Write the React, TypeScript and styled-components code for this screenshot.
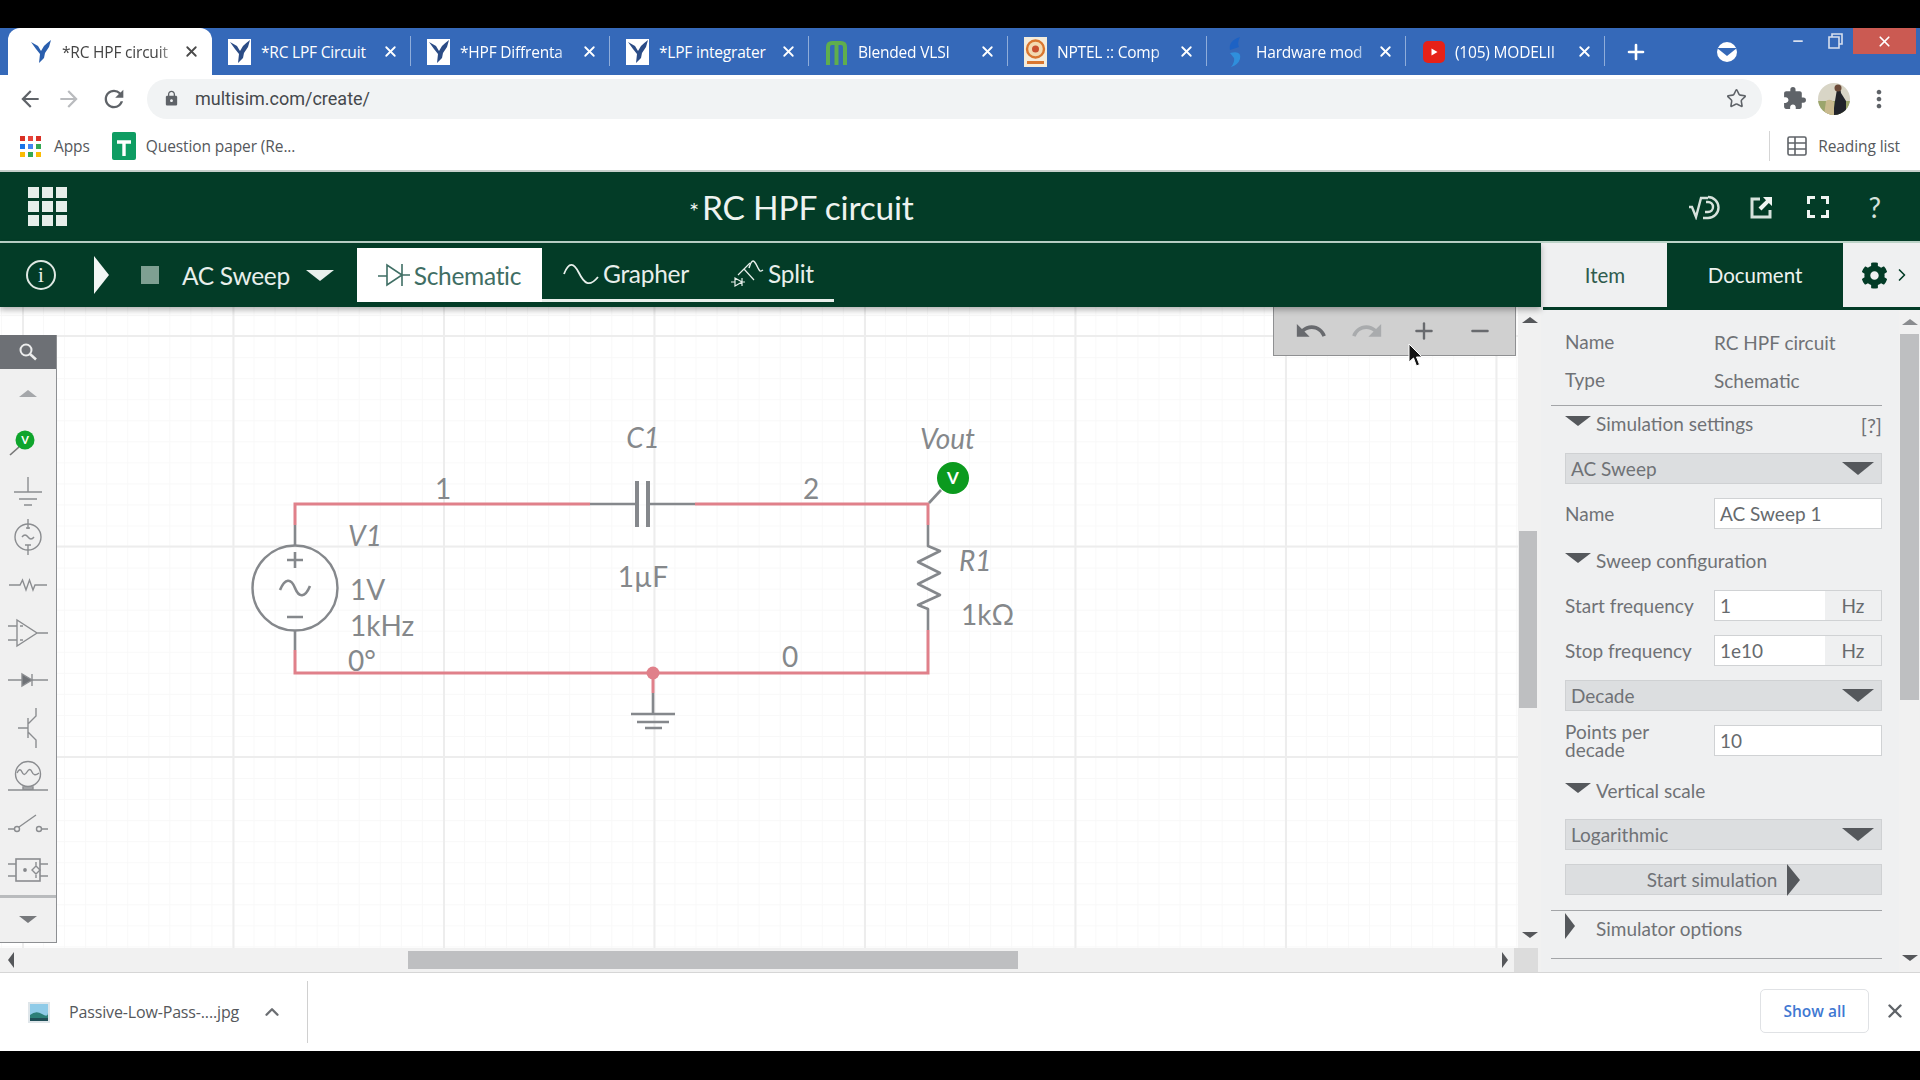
import React from 'react';
import styled, { createGlobalStyle, css } from 'styled-components';
import { X, Plus, Minus, Star, ChevronUp, ChevronRight } from 'lucide-react';
import { MdArrowBack, MdArrowForward, MdRefresh, MdLock, MdExtension, MdMoreVert, MdUndo, MdRedo } from 'react-icons/md';
import { FaCog } from 'react-icons/fa';

const GREEN = '#033c27';
const WIRE = '#e0808a';
const PART = '#85888c';
const LABEL = '#85888b';

const GlobalStyle = createGlobalStyle`
  html, body { margin: 0; padding: 0; background: #000; }
  * { box-sizing: border-box; }
  svg { display: block; }
`;

const Page = styled.div`
  width: 1920px;
  height: 1080px;
  display: flex;
  flex-direction: column;
  background: #000;
  overflow: hidden;
  font-family: Lato, 'Open Sans', sans-serif;
`;

const Letterbox = styled.div<{ $h: number }>`
  height: ${({ $h }) => $h}px;
  flex: none;
  background: #000;
`;

/* browser chrome */
const TabStrip = styled.div`
  height: 47px;
  flex: none;
  display: flex;
  align-items: stretch;
  padding-left: 8px;
  background: #3569b9;
  position: relative;
`;

const Tab = styled.div<{ $active?: boolean }>`
  position: relative;
  width: ${({ $active }) => ($active ? 204 : 199)}px;
  flex: none;
  display: flex;
  align-items: center;
  padding: 0 12px 0 ${({ $active }) => ($active ? 21 : 16)}px;
  font: 15.5px 'Open Sans', sans-serif;
  letter-spacing: -0.2px;
  color: ${({ $active }) => ($active ? '#444' : '#fff')};
  ${({ $active }) =>
    $active
      ? css`
          background: #fff;
          border-radius: 12px 12px 0 0;
        `
      : css`
          &::after {
            content: '';
            position: absolute;
            right: 0;
            top: 8px;
            bottom: 9px;
            width: 1px;
            background: #8fadda;
          }
        `}
`;

const TabIcon = styled.span`
  width: 23px;
  height: 26px;
  flex: none;
  margin-right: 10px;
  display: flex;
  align-items: center;
  justify-content: center;
`;

const TabTitle = styled.span<{ $fade?: boolean }>`
  flex: 1;
  overflow: hidden;
  white-space: nowrap;
  ${({ $fade }) =>
    $fade &&
    css`
      -webkit-mask-image: linear-gradient(90deg, #000 82%, transparent 100%);
      mask-image: linear-gradient(90deg, #000 82%, transparent 100%);
    `}
`;

const TabClose = styled.span`
  flex: none;
  display: flex;
  margin-left: 4px;
`;

const NewTab = styled.div`
  width: 62px;
  flex: none;
  display: flex;
  align-items: center;
  justify-content: center;
  color: #fff;
`;

const WindowControls = styled.div`
  margin-left: auto;
  display: flex;
  align-items: flex-start;
  color: #cfd9ea;
`;

const ProfileDot = styled.div`
  width: 20px;
  height: 20px;
  margin: 14px 42px 0 0;
  border-radius: 50%;
  background: #fff;
  display: flex;
  align-items: center;
  justify-content: center;
`;

const Caret = styled.span<{ $dir: 'up' | 'down' | 'left' | 'right'; $size: number; $color: string }>`
  display: inline-block;
  flex: none;
  width: 0;
  height: 0;
  border-style: solid;
  border-color: transparent;
  ${({ $dir, $size, $color }) => {
    const s = $size;
    const w = Math.round(s * 1.25);
    switch ($dir) {
      case 'up':
        return `border-width:0 ${w}px ${s}px; border-bottom-color:${$color};`;
      case 'down':
        return `border-width:${s}px ${w}px 0; border-top-color:${$color};`;
      case 'left':
        return `border-width:${w}px ${s}px ${w}px 0; border-right-color:${$color};`;
      default:
        return `border-width:${w}px 0 ${w}px ${s}px; border-left-color:${$color};`;
    }
  }}
`;

const WinButton = styled.div<{ $close?: boolean }>`
  width: ${({ $close }) => ($close ? 63 : 37)}px;
  height: 26px;
  margin-right: ${({ $close }) => ($close ? 4 : 0)}px;
  display: flex;
  align-items: center;
  justify-content: center;
  background: ${({ $close }) => ($close ? '#cb5a52' : 'transparent')};
  color: #fff;
`;

const UrlRow = styled.div`
  height: 47px;
  flex: none;
  display: flex;
  align-items: center;
  background: #fff;
  color: #6a6c70;
`;

const NavIcon = styled.span<{ $w: number; $muted?: boolean }>`
  width: ${({ $w }) => $w}px;
  flex: none;
  display: flex;
  justify-content: center;
  color: ${({ $muted }) => ($muted ? '#b9bbbe' : '#5f6368')};
`;

const Omnibox = styled.div`
  width: 1615px;
  height: 40px;
  flex: none;
  margin-left: 11px;
  padding-left: 16px;
  display: flex;
  align-items: center;
  border-radius: 20px;
  background: #f1f3f4;
  font: 18px Roboto, sans-serif;
  color: #45484c;
`;

const OmniLock = styled.span`
  display: flex;
  margin-right: 15px;
  color: #5f6368;
`;

const OmniStar = styled.span`
  margin-left: auto;
  margin-right: 15px;
  display: flex;
  color: #5f6368;
`;

const Bookmarks = styled.div`
  height: 50px;
  flex: none;
  display: flex;
  align-items: center;
  padding: 0 20px;
  background: #fff;
  border-bottom: 2px solid #c7cfcb;
  font: 15.5px 'Open Sans', sans-serif;
  color: #55585c;
  letter-spacing: -0.1px;
`;

const AppsDots = styled.div`
  display: grid;
  grid-template-columns: repeat(3, 5px);
  gap: 3px 3px;
  margin-right: 13px;
`;

const AppsDot = styled.i<{ $c: string }>`
  width: 5px;
  height: 5px;
  background: ${({ $c }) => $c};
`;

const SheetBadge = styled.span`
  margin: 0 10px 0 22px;
  display: flex;
`;

const ReadingList = styled.div`
  margin-left: auto;
  height: 30px;
  display: flex;
  align-items: center;
  gap: 11px;
  padding-left: 17px;
  border-left: 1px solid #d5d5d5;
`;

/* multisim header */
const AppHeader = styled.div`
  height: 69px;
  flex: none;
  display: flex;
  align-items: center;
  position: relative;
  padding-left: 28px;
  background: ${GREEN};
  border-bottom: 2px solid #bcd3c8;
  box-sizing: content-box;
`;

const Waffle = styled.div`
  display: grid;
  grid-template-columns: repeat(3, 11px);
  gap: 3px;
`;

const WaffleCell = styled.i`
  width: 11px;
  height: 11px;
  background: #e6eeea;
`;

const AppTitle = styled.div`
  margin-left: 622px;
  display: flex;
  align-items: baseline;
  color: #eef3f0;
  font-size: 33.5px;
  letter-spacing: -0.2px;
`;

const TitleStar = styled.span`
  font-size: 24px;
  margin-right: 3px;
`;

const HeaderIcons = styled.div`
  margin-left: auto;
  display: flex;
  align-items: center;
  color: #d6e2dc;
`;

const HeaderIcon = styled.span`
  width: 56.5px;
  display: flex;
  justify-content: center;
  font-size: 28px;
`;

/* work area */
const Workspace = styled.div`
  flex: 1;
  min-height: 0;
  display: flex;
  background: #fff;
`;

const LeftColumn = styled.div`
  width: 1541px;
  flex: none;
  display: flex;
  flex-direction: column;
`;

const SimToolbar = styled.div`
  height: 64px;
  flex: none;
  display: flex;
  align-items: center;
  padding-left: 26px;
  background: ${GREEN};
  color: #e8efeb;
  position: relative;
  z-index: 2;
  box-shadow: 0 3px 6px rgba(0, 0, 0, 0.3);
`;

const InfoCircle = styled.div`
  width: 30px;
  height: 30px;
  flex: none;
  border: 2px solid #dfe8e3;
  border-radius: 50%;
  display: flex;
  align-items: center;
  justify-content: center;
  font: 21px 'Liberation Serif', serif;
`;

const PlayBtn = styled.span`
  margin-left: 38px;
  display: flex;
`;

const StopBtn = styled.span`
  width: 18px;
  height: 18px;
  margin-left: 32px;
  background: #7ea092;
`;

const SimMode = styled.span`
  margin-left: 23px;
  font-size: 24.5px;
  letter-spacing: -0.3px;
`;

const ModeCaret = styled.span`
  margin-left: 16px;
  margin-right: 23px;
  display: flex;
`;

const ViewTabs = styled.div`
  height: 54px;
  align-self: flex-start;
  margin-top: 5px;
  display: flex;
  border-bottom: 3px solid #e8efeb;
`;

const ViewTab = styled.div<{ $active?: boolean; $w: number }>`
  width: ${({ $w }) => $w}px;
  margin-bottom: ${({ $active }) => ($active ? -3 : 0)}px;
  display: flex;
  align-items: center;
  justify-content: center;
  gap: 4px;
  font-size: 24.5px;
  letter-spacing: -0.3px;
  background: ${({ $active }) => ($active ? '#fff' : 'transparent')};
  color: ${({ $active }) => ($active ? '#3f6e64' : '#e8efeb')};
`;

const CanvasFrame = styled.div`
  flex: 1;
  min-height: 0;
  display: flex;
  flex-direction: column;
`;

const CanvasRow = styled.div`
  flex: 1;
  min-height: 0;
  display: flex;
`;

const Viewport = styled.div`
  position: relative;
  width: 1518px;
  flex: none;
  overflow: hidden;
  background-color: #fff;
  background-image:
    linear-gradient(90deg, #ededed 2px, transparent 2px),
    linear-gradient(0deg, #ededed 2px, transparent 2px),
    linear-gradient(90deg, #f8f8f8 1px, transparent 1px),
    linear-gradient(0deg, #f8f8f8 1px, transparent 1px);
  background-size: 210.5px 210.5px, 210.5px 210.5px, 21.05px 21.05px, 21.05px 21.05px;
  background-position: 22px 0, 0 30px, 22px 0, 0 9px;
`;

const Palette = styled.div`
  position: absolute;
  left: 0;
  top: 28px;
  width: 57px;
  height: 608px;
  display: flex;
  flex-direction: column;
  background: #f0f0f0;
  border-right: 1px solid #8d8f92;
  border-bottom: 1px solid #8d8f92;
`;

const PaletteSearch = styled.div`
  height: 34px;
  flex: none;
  display: flex;
  align-items: center;
  justify-content: center;
  background: #6d7075;
`;

const PaletteArrow = styled.div<{ $h: number; $down?: boolean }>`
  flex: none;
  height: ${({ $h }) => $h}px;
  display: flex;
  align-items: center;
  justify-content: center;
  ${({ $down }) => $down && 'border-top: 3px solid #b9bbbd;'}
`;

const PaletteItem = styled.div`
  height: 47.7px;
  flex: none;
  display: flex;
  align-items: center;
  justify-content: center;
`;

const UndoBar = styled.div`
  position: absolute;
  right: 2px;
  top: 0;
  width: 243px;
  height: 49px;
  display: flex;
  align-items: center;
  padding-left: 9px;
  background: #d0d0d0;
  border: 1px solid #8f9092;
  border-top: none;
  color: #6a6c70;
`;

const UndoSlot = styled.span<{ $muted?: boolean }>`
  width: 56.3px;
  display: flex;
  justify-content: center;
  color: ${({ $muted }) => ($muted ? '#a9abad' : '#686a6e')};
`;

const Cursor = styled.svg`
  position: absolute;
  left: 1408px;
  top: 36px;
`;

const VScroll = styled.div<{ $w: number }>`
  width: ${({ $w }) => $w}px;
  flex: none;
  position: relative;
  background: #f1f1f1;
  display: flex;
  flex-direction: column;
  align-items: center;
`;

const ScrollArrowSlot = styled.div<{ $h: number }>`
  height: ${({ $h }) => $h}px;
  flex: none;
  display: flex;
  align-items: center;
  justify-content: center;
`;

const VThumb = styled.div<{ $w: number; $top: number; $h: number }>`
  position: absolute;
  left: 1px;
  top: ${({ $top }) => $top}px;
  width: ${({ $w }) => $w}px;
  height: ${({ $h }) => $h}px;
  background: #bebfc1;
`;

const VSpacer = styled.div`
  flex: 1;
`;

const HScroll = styled.div`
  height: 24px;
  flex: none;
  display: flex;
  align-items: center;
  background: #f1f1f1;
  padding-left: 8px;
`;

const HThumb = styled.div`
  width: 610px;
  height: 18px;
  margin-left: 394px;
  background: #bebfc1;
`;

const HRightArrow = styled.div`
  margin-left: 484px;
  display: flex;
`;

const HCorner = styled.div`
  width: 24px;
  height: 24px;
  margin-left: 6px;
  background: #dcdcdc;
`;

/* right panel */
const RightColumn = styled.div`
  flex: 1;
  min-width: 0;
  display: flex;
  flex-direction: column;
  background: #eff0f1;
`;

const PanelTabs = styled.div`
  height: 67px;
  flex: none;
  display: flex;
  align-items: stretch;
  margin-left: 2px;
  border-bottom: 3px solid ${GREEN};
`;

const PanelTab = styled.div<{ $active?: boolean; $w: number }>`
  width: ${({ $w }) => $w}px;
  display: flex;
  align-items: center;
  justify-content: center;
  font-size: 20.5px;
  background: ${({ $active }) => ($active ? GREEN : 'transparent')};
  color: ${({ $active }) => ($active ? '#eef3f0' : '#2f5c4e')};
`;

const PanelGear = styled.div`
  flex: 1;
  display: flex;
  align-items: center;
  padding-left: 18px;
  gap: 4px;
  color: ${GREEN};
`;

const PanelBody = styled.div`
  flex: 1;
  min-height: 0;
  display: flex;
`;

const Form = styled.div`
  flex: 1;
  min-width: 0;
  overflow: hidden;
  padding: 13px 17px 0 24px;
  color: #6f7276;
  font-size: 19px;
`;

const InfoRow = styled.div`
  height: 38px;
  display: flex;
  align-items: center;
`;

const FieldLabel = styled.div`
  width: 149px;
  flex: none;
  line-height: 18px;
`;

const Divider = styled.div<{ $mt: number }>`
  height: 1px;
  margin: ${({ $mt }) => $mt}px 0 0 -14px;
  background: #a3a5a8;
`;

const SectionHead = styled.div<{ $mt?: number }>`
  height: 34px;
  margin-top: ${({ $mt }) => $mt ?? 0}px;
  display: flex;
  align-items: center;
`;

const SectionArrow = styled.span`
  width: 31px;
  flex: none;
  display: flex;
  margin-top: -4px;
`;

const HelpLink = styled.span`
  margin-left: auto;
  margin-top: 3px;
  font-size: 20px;
`;

const SelectBox = styled.div<{ $mt: number }>`
  height: 31px;
  margin-top: ${({ $mt }) => $mt}px;
  display: flex;
  align-items: center;
  justify-content: space-between;
  padding: 0 7px 0 5px;
  background: #dcdee0;
  border: 1px solid #cfd1d3;
`;

const FieldRow = styled.div<{ $mt: number }>`
  height: 31px;
  margin-top: ${({ $mt }) => $mt}px;
  display: flex;
  align-items: center;
`;

const InputBox = styled.div`
  flex: 1;
  height: 31px;
  display: flex;
  align-items: center;
  justify-content: space-between;
  padding-left: 5px;
  background: #fff;
  border: 1px solid #d0d2d4;
  color: #666a6e;
`;

const UnitCell = styled.span`
  width: 56px;
  height: 100%;
  display: flex;
  align-items: center;
  justify-content: center;
  background: #eff0f1;
`;

const StartButton = styled.div<{ $mt: number }>`
  height: 31px;
  margin-top: ${({ $mt }) => $mt}px;
  display: flex;
  align-items: center;
  justify-content: center;
  gap: 10px;
  background: #dcdee0;
  border: 1px solid #cfd1d3;
`;

/* download shelf */
const DownloadBar = styled.div`
  height: 79px;
  flex: none;
  display: flex;
  align-items: center;
  padding-left: 28px;
  background: #fff;
  border-top: 1px solid #d6d6d6;
  font: 16px 'Open Sans', sans-serif;
  color: #55585c;
`;

const FileName = styled.span`
  margin-left: 19px;
  letter-spacing: -0.15px;
`;

const FileChevron = styled.span`
  margin-left: 22px;
  display: flex;
  color: #6b6e72;
`;

const ShelfSep = styled.div`
  width: 1px;
  height: 62px;
  margin-left: 24px;
  background: #d0d0d0;
`;

const ShowAll = styled.div`
  margin-left: auto;
  width: 109px;
  height: 44px;
  margin-top: -2px;
  display: flex;
  align-items: center;
  justify-content: center;
  border: 1px solid #e0e2e5;
  border-radius: 5px;
  color: #3f78d2;
  font-weight: 600;
  font-size: 15.5px;
`;

const ShelfClose = styled.span`
  width: 51px;
  margin-top: -2px;
  display: flex;
  justify-content: center;
  color: #5f6368;
`;

/* small drawings */
const NiMark = ({ color }: { color: string }) => (
  <path
    d="M2 3 L9 7 L12 12 L15 7 Q18 4 22 1 L20 8 L16 14 L15 19 L10 24 L11 15 L7 10 Z"
    fill={color}
  />
);

const NiIcon = ({ active }: { active?: boolean }) => (
  <svg width="23" height="26" viewBox="0 0 23 26">
    {!active && <rect x="0" y="0" width="23" height="26" fill="#fff" />}
    <NiMark color={active ? '#2a5fae' : '#2b4c86'} />
  </svg>
);

const MoodleIcon = () => (
  <svg width="23" height="26" viewBox="0 0 23 26" fill="none" stroke="#5fae4e" strokeWidth="4">
    <path d="M3 26V8Q3 4 7 4H16Q20 4 20 8V26M11.5 5V26" />
  </svg>
);

const NptelIcon = () => (
  <svg width="23" height="30" viewBox="0 0 23 30">
    <rect width="23" height="30" fill="#f4ecdc" />
    <circle cx="11.5" cy="12" r="8.5" fill="#f3d9b0" stroke="#d9762f" strokeWidth="2.4" />
    <circle cx="11.5" cy="12" r="3.5" fill="#c9502f" />
    <rect x="3" y="24" width="17" height="3" fill="#d9762f" />
  </svg>
);

const HardwareIcon = () => (
  <svg width="20" height="32" viewBox="0 0 20 32">
    <path d="M15 1Q3 5 5 14L14 11Q12 7 15 1Z" fill="#1d62c4" />
    <path d="M5 17Q17 14 15 23Q13 29 6 31Q10 26 9 22Z" fill="#2f8fdc" />
  </svg>
);

const YoutubeIcon = () => (
  <svg width="22" height="22" viewBox="0 0 22 22">
    <rect width="22" height="22" rx="5" fill="#e62117" />
    <path d="M8.5 7.5 L14.5 11 L8.5 14.5Z" fill="#fff" />
  </svg>
);

const tabs = [
  { title: '*RC HPF circuit', icon: <NiIcon active />, active: true, fade: true },
  { title: '*RC LPF Circuit', icon: <NiIcon /> },
  { title: '*HPF Diffrenta', icon: <NiIcon />, fade: true },
  { title: '*LPF integrater', icon: <NiIcon /> },
  { title: 'Blended VLSI', icon: <MoodleIcon />, fade: true },
  { title: 'NPTEL :: Comp', icon: <NptelIcon />, fade: true },
  { title: 'Hardware mod', icon: <HardwareIcon />, fade: true },
  { title: '(105) MODELII', icon: <YoutubeIcon />, fade: true },
];

const Avatar = () => (
  <svg width="32" height="32" viewBox="0 0 32 32">
    <defs>
      <clipPath id="av">
        <circle cx="16" cy="16" r="16" />
      </clipPath>
    </defs>
    <g clipPath="url(#av)">
      <rect width="32" height="32" fill="#d8d5c6" />
      <rect y="18" width="32" height="14" fill="#9ba56c" />
      <path d="M19 6q4 0 4 4l5 8v14H15l2-14z" fill="#22242a" />
      <circle cx="20" cy="5" r="3.5" fill="#6b4a38" />
      <path d="M8 18q4-3 8 1v13H6z" fill="#c9ba8f" />
    </g>
  </svg>
);

const ReadingIcon = () => (
  <svg width="20" height="20" viewBox="0 0 20 20" fill="none" stroke="#5f6368" strokeWidth="1.6">
    <rect x="1" y="1" width="18" height="18" rx="1.5" />
    <path d="M1 7H19M1 13H19M8 1V19" />
  </svg>
);

const SheetIcon = () => (
  <svg width="24" height="28" viewBox="0 0 24 28">
    <rect width="24" height="28" rx="2" fill="#0e9c62" />
    <path d="M5 10H19M12 10V24" stroke="#fff" strokeWidth="3.4" />
  </svg>
);

const ImageFileIcon = () => (
  <svg width="22" height="21" viewBox="0 0 22 21">
    <rect width="22" height="21" fill="#dfe6ea" />
    <rect x="2" y="2" width="18" height="17" fill="#8fcbe8" />
    <path d="M2 13Q8 8 14 12T20 11V19H2Z" fill="#2c7f78" />
    <rect x="2" y="16" width="18" height="3" fill="#1f4e57" />
  </svg>
);

const ProbeHeaderIcon = () => (
  <svg width="34" height="26" viewBox="0 0 34 26" fill="none" stroke="#d6e2dc" strokeWidth="2.4">
    <path d="M1 13H4L8 23L13 4H20" />
    <path d="M15 24H20A10.5 10.5 0 0 0 20 3" />
    <path d="M17 18H20A5 5 0 0 0 20 8H18" />
  </svg>
);

const PopoutIcon = () => (
  <svg width="24" height="24" viewBox="0 0 24 24">
    <path d="M10 4H2V22H20V15" fill="none" stroke="#d6e2dc" strokeWidth="3" />
    <path d="M13 2H22V11L18.8 8L11.5 15.5L8.5 12.5L16 5.2Z" fill="#f0f5f2" />
  </svg>
);

const FullscreenIcon = () => (
  <svg width="22" height="22" viewBox="0 0 22 22" fill="none" stroke="#f0f5f2" strokeWidth="3">
    <path d="M1.5 8V1.5H8M14 1.5H20.5V8M20.5 14V20.5H14M8 20.5H1.5V14" />
  </svg>
);

const DiodeTabIcon = () => (
  <svg width="32" height="24" viewBox="0 0 32 24" fill="none" stroke="#3f6e64" strokeWidth="1.6">
    <path d="M0 13H9M9 2V22L24 12ZM24 1V23M24 12H32" />
  </svg>
);

const WaveTabIcon = () => (
  <svg width="36" height="24" viewBox="0 0 36 24" fill="none" stroke="#e8efeb" strokeWidth="1.8">
    <path d="M1 12C6 -1 11 1 16 11S26 26 35 15" />
  </svg>
);

const SplitTabIcon = () => (
  <svg width="34" height="28" viewBox="0 0 34 28" fill="none" stroke="#e8efeb" strokeWidth="1.2">
    <path d="M1 22H5M5 18V26L12 22ZM12 18V26M12 22H15" />
    <path d="M8 15L20 3M14 9L24 20" />
    <path d="M19 8C22 -2 24 0 27 6S30 12 33 10" strokeWidth="1.5" />
  </svg>
);

const SearchIcon = () => (
  <svg width="20" height="20" viewBox="0 0 20 20" fill="none" stroke="#eceded" strokeWidth="2">
    <circle cx="8" cy="8" r="5.5" />
    <path d="M12 12L18 17.5" strokeWidth="2.6" />
  </svg>
);

const PaletteGlyph = ({ children }: { children: React.ReactNode }) => (
  <svg width="48" height="48" viewBox="0 0 48 48" fill="none" stroke="#8b8d90" strokeWidth="1.4">
    {children}
  </svg>
);

const paletteParts: React.ReactNode[] = [
  <>
    <path d="M6 37L15 29" stroke="#777" strokeWidth="1.6" />
    <circle cx="21" cy="22" r="9.5" fill="#0fa52c" stroke="none" />
    <text x="21" y="26" textAnchor="middle" fill="#fff" stroke="none" fontSize="11" fontWeight="700" fontFamily="Lato">
      V
    </text>
  </>,
  <path d="M24 11V26M10 26H38M15 33H33M20 39H28" />,
  <>
    <circle cx="24" cy="24" r="13" />
    <path d="M24 6V16M24 32V42M22 15H26M18 24Q21 20 24 24T30 24M21 32H27" />
  </>,
  <path d="M5 24H16L18.5 19L22 29L25.5 19L29 29L31 24H43" />,
  <path d="M4 17H13M4 31H13M13 11V37L33 24ZM33 24H44M16 17H19M16 31H19" />,
  <>
    <path d="M4 24H44M28 18V30" />
    <path d="M18 18V30L28 24Z" fill="#6f7276" />
  </>,
  <path d="M14 24H24M24 14V34M24 20L32 12V4M24 28L32 36V44" />,
  <>
    <circle cx="24" cy="22" r="12.5" />
    <path d="M13 21Q16 15 18 20T23 20T28 20T35 21M19 35H29V37H19ZM4 38H44" />
  </>,
  <>
    <circle cx="13" cy="30" r="2.5" />
    <circle cx="35" cy="30" r="2.5" />
    <path d="M4 30H10M38 30H44M15 28L32 16" />
  </>,
  <>
    <rect x="12" y="12" width="24" height="22" strokeWidth="1.6" />
    <path d="M4 17H12M4 29H12M36 17H44M36 29H44M32 15V20M32 26V31M28 23L32 19L36 23L32 27Z" />
    <circle cx="21" cy="23" r="1.2" fill="#6f7276" />
  </>,
];

const CircuitDrawing = () => (
  <svg width="1518" height="641" viewBox="0 307 1518 641">
    <g fill="none" strokeLinejoin="miter">
      <g stroke={WIRE} strokeWidth="3">
        <path d="M295 525V504H590" />
        <path d="M695 504H928V525" />
        <path d="M928 630V673H295V650" />
        <path d="M653 673V693" />
      </g>
      <circle cx="653" cy="673" r="6.5" fill={WIRE} />
      <g stroke={PART} strokeWidth="2.6">
        <path d="M295 525V545M295 631V650" />
        <circle cx="295" cy="588" r="42.5" strokeWidth="2.4" />
        <path d="M287 560H303M295 552V568M287 617H303" />
        <path d="M280 590C285 578 291 578 295 588S305 598 310 586" />
        <path d="M590 504H637M648 504H695" />
        <path d="M637 481V527M648 481V527" strokeWidth="4" />
        <path d="M928 525V546L940 551L918 562L940 573L918 584L940 595L918 605L928 609V630" strokeLinejoin="round" />
        <path d="M653 693V714M631 714H675M637 722H669M645 728H662" />
        <path d="M929 503L941 490" />
      </g>
      <circle cx="953" cy="478" r="16" fill="#0b9a1e" />
    </g>
    <g fontFamily="Lato, sans-serif" fontSize="28" fill={LABEL}>
      <text x="643" y="448" textAnchor="middle" fontStyle="italic">C1</text>
      <text x="443" y="499" textAnchor="middle">1</text>
      <text x="811" y="499" textAnchor="middle">2</text>
      <text x="790" y="667" textAnchor="middle">0</text>
      <text x="348" y="546" fontStyle="italic">V1</text>
      <text x="350" y="600">1V</text>
      <text x="350" y="636">1kHz</text>
      <text x="348" y="671">0°</text>
      <text x="643" y="587" textAnchor="middle">1µF</text>
      <text x="920" y="449" fontStyle="italic">Vout</text>
      <text x="959" y="571" fontStyle="italic">R1</text>
      <text x="961" y="625">1kΩ</text>
      <text x="953" y="484" textAnchor="middle" fill="#fff" fontSize="17" fontWeight="700">V</text>
    </g>
  </svg>
);

export default function App() {
  return (
    <Page>
      <GlobalStyle />
      <Letterbox $h={28} />

      <TabStrip>
        {tabs.map((t) => (
          <Tab key={t.title} $active={t.active}>
            <TabIcon>{t.icon}</TabIcon>
            <TabTitle $fade={t.fade}>{t.title}</TabTitle>
            <TabClose>
              <X size={17} strokeWidth={2.6} color={t.active ? '#4a4a4a' : '#fff'} />
            </TabClose>
          </Tab>
        ))}
        <NewTab>
          <Plus size={24} strokeWidth={2.6} />
        </NewTab>
        <WindowControls>
          <ProfileDot>
            <Caret $dir="down" $size={8} $color="#3569b9" />
          </ProfileDot>
          <WinButton>
            <Minus size={14} strokeWidth={3} color="#d7dfee" />
          </WinButton>
          <WinButton>
            <svg width="16" height="16" viewBox="0 0 16 16" fill="none" stroke="#d7dfee" strokeWidth="1.6">
              <path d="M5 4V1H15V11H12M2 4H12V15H2Z" />
            </svg>
          </WinButton>
          <WinButton $close>
            <X size={17} strokeWidth={2.4} />
          </WinButton>
        </WindowControls>
      </TabStrip>

      <UrlRow>
        <NavIcon $w={60} style={{ marginRight: -14 }}>
          <MdArrowBack size={26} />
        </NavIcon>
        <NavIcon $w={46} $muted>
          <MdArrowForward size={26} />
        </NavIcon>
        <NavIcon $w={44}>
          <MdRefresh size={28} />
        </NavIcon>
        <Omnibox>
          <OmniLock>
            <MdLock size={17} />
          </OmniLock>
          multisim.com/create/
          <OmniStar>
            <Star size={21} strokeWidth={1.8} />
          </OmniStar>
        </Omnibox>
        <NavIcon $w={48} style={{ marginLeft: 8 }}>
          <MdExtension size={25} />
        </NavIcon>
        <Avatar />
        <NavIcon $w={60} style={{ marginLeft: -1 }}>
          <MdMoreVert size={28} />
        </NavIcon>
      </UrlRow>

      <Bookmarks>
        <AppsDots>
          {['#d93025', '#e8453c', '#d93025', '#1a73e8', '#4285f4', '#34a853', '#fbbc04', '#34a853', '#fbbc04'].map((c, i) => (
            <AppsDot key={i} $c={c} />
          ))}
        </AppsDots>
        Apps
        <SheetBadge>
          <SheetIcon />
        </SheetBadge>
        Question paper (Re...
        <ReadingList>
          <ReadingIcon />
          Reading list
        </ReadingList>
      </Bookmarks>

      <AppHeader>
        <Waffle>
          {Array.from({ length: 9 }, (_, i) => (
            <WaffleCell key={i} />
          ))}
        </Waffle>
        <AppTitle>
          <TitleStar>*</TitleStar>RC HPF circuit
        </AppTitle>
        <HeaderIcons>
          <HeaderIcon>
            <ProbeHeaderIcon />
          </HeaderIcon>
          <HeaderIcon>
            <PopoutIcon />
          </HeaderIcon>
          <HeaderIcon>
            <FullscreenIcon />
          </HeaderIcon>
          <HeaderIcon>?</HeaderIcon>
          <Letterbox $h={0} style={{ width: 17 }} />
        </HeaderIcons>
      </AppHeader>

      <Workspace>
        <LeftColumn>
          <SimToolbar>
            <InfoCircle>i</InfoCircle>
            <PlayBtn>
              <Caret $dir="right" $size={15} $color="#f2f6f4" />
            </PlayBtn>
            <StopBtn />
            <SimMode>AC Sweep</SimMode>
            <ModeCaret>
              <Caret $dir="down" $size={11} $color="#e8efeb" />
            </ModeCaret>
            <ViewTabs>
              <ViewTab $active $w={185}>
                <DiodeTabIcon />
                Schematic
              </ViewTab>
              <ViewTab $w={168}>
                <WaveTabIcon />
                Grapher
              </ViewTab>
              <ViewTab $w={124}>
                <SplitTabIcon />
                Split
              </ViewTab>
            </ViewTabs>
          </SimToolbar>

          <CanvasFrame>
            <CanvasRow>
              <Viewport>
                <CircuitDrawing />
                <Palette>
                  <PaletteSearch>
                    <SearchIcon />
                  </PaletteSearch>
                  <PaletteArrow $h={49}>
                    <Caret $dir="up" $size={7} $color="#a5a7aa" />
                  </PaletteArrow>
                  {paletteParts.map((part, i) => (
                    <PaletteItem key={i}>
                      <PaletteGlyph>{part}</PaletteGlyph>
                    </PaletteItem>
                  ))}
                  <PaletteArrow $h={47} $down>
                    <Caret $dir="down" $size={7} $color="#77797c" />
                  </PaletteArrow>
                </Palette>
                <UndoBar>
                  <UndoSlot>
                    <MdUndo size={34} />
                  </UndoSlot>
                  <UndoSlot $muted>
                    <MdRedo size={34} />
                  </UndoSlot>
                  <UndoSlot>
                    <Plus size={26} strokeWidth={2.2} />
                  </UndoSlot>
                  <UndoSlot>
                    <Minus size={26} strokeWidth={2.2} />
                  </UndoSlot>
                </UndoBar>
                <Cursor width="16" height="24" viewBox="0 0 16 24">
                  <path d="M1 1V19L5.5 15L8.5 23L11.5 21.5L8.5 14H14Z" fill="#111" stroke="#fff" strokeWidth="1" />
                </Cursor>
              </Viewport>
              <VScroll $w={23}>
                <ScrollArrowSlot $h={26}>
                  <Caret $dir="up" $size={6} $color="#55575a" />
                </ScrollArrowSlot>
                <VThumb $w={18} $top={224} $h={177} />
                <VSpacer />
                <ScrollArrowSlot $h={26}>
                  <Caret $dir="down" $size={6} $color="#55575a" />
                </ScrollArrowSlot>
              </VScroll>
            </CanvasRow>
            <HScroll>
              <Caret $dir="left" $size={6} $color="#55575a" />
              <HThumb />
              <HRightArrow>
                <Caret $dir="right" $size={6} $color="#55575a" />
              </HRightArrow>
              <HCorner />
            </HScroll>
          </CanvasFrame>
        </LeftColumn>

        <RightColumn>
          <PanelTabs>
            <PanelTab $w={124}>Item</PanelTab>
            <PanelTab $active $w={176}>
              Document
            </PanelTab>
            <PanelGear>
              <FaCog size={27} />
              <ChevronRight size={20} strokeWidth={2} />
            </PanelGear>
          </PanelTabs>
          <PanelBody>
            <Form>
              <InfoRow>
                <FieldLabel>Name</FieldLabel>RC HPF circuit
              </InfoRow>
              <InfoRow>
                <FieldLabel>Type</FieldLabel>Schematic
              </InfoRow>
              <Divider $mt={6} />
              <SectionHead>
                <SectionArrow>
                  <Caret $dir="down" $size={10} $color="#55585c" />
                </SectionArrow>
                Simulation settings
                <HelpLink>[?]</HelpLink>
              </SectionHead>
              <SelectBox $mt={13}>
                AC Sweep
                <Caret $dir="down" $size={13} $color="#55585c" />
              </SelectBox>
              <FieldRow $mt={14}>
                <FieldLabel>Name</FieldLabel>
                <InputBox>AC Sweep 1</InputBox>
              </FieldRow>
              <SectionHead $mt={14}>
                <SectionArrow>
                  <Caret $dir="down" $size={10} $color="#55585c" />
                </SectionArrow>
                Sweep configuration
              </SectionHead>
              <FieldRow $mt={13}>
                <FieldLabel>Start frequency</FieldLabel>
                <InputBox>
                  1<UnitCell>Hz</UnitCell>
                </InputBox>
              </FieldRow>
              <FieldRow $mt={14}>
                <FieldLabel>Stop frequency</FieldLabel>
                <InputBox>
                  1e10<UnitCell>Hz</UnitCell>
                </InputBox>
              </FieldRow>
              <SelectBox $mt={14}>
                Decade
                <Caret $dir="down" $size={13} $color="#55585c" />
              </SelectBox>
              <FieldRow $mt={14}>
                <FieldLabel>
                  Points per
                  <br />
                  decade
                </FieldLabel>
                <InputBox>10</InputBox>
              </FieldRow>
              <SectionHead $mt={17}>
                <SectionArrow>
                  <Caret $dir="down" $size={10} $color="#55585c" />
                </SectionArrow>
                Vertical scale
              </SectionHead>
              <SelectBox $mt={12}>
                Logarithmic
                <Caret $dir="down" $size={13} $color="#55585c" />
              </SelectBox>
              <StartButton $mt={14}>
                Start simulation
                <Caret $dir="right" $size={13} $color="#55585c" />
              </StartButton>
              <Divider $mt={15} />
              <SectionHead>
                <SectionArrow>
                  <Caret $dir="right" $size={10} $color="#55585c" />
                </SectionArrow>
                Simulator options
              </SectionHead>
              <Divider $mt={13} />
              <SectionHead $mt={5}>
                <SectionArrow>
                  <Caret $dir="down" $size={10} $color="#55585c" />
                </SectionArrow>
                Initial conditions
                <HelpLink>[?]</HelpLink>
              </SectionHead>
            </Form>
            <VScroll $w={21}>
              <ScrollArrowSlot $h={24}>
                <Caret $dir="up" $size={6} $color="#8a8c8f" />
              </ScrollArrowSlot>
              <VThumb $w={19} $top={24} $h={366} />
              <VSpacer />
              <ScrollArrowSlot $h={28}>
                <Caret $dir="down" $size={6} $color="#55575a" />
              </ScrollArrowSlot>
            </VScroll>
          </PanelBody>
        </RightColumn>
      </Workspace>

      <DownloadBar>
        <ImageFileIcon />
        <FileName>Passive-Low-Pass-....jpg</FileName>
        <FileChevron>
          <ChevronUp size={22} strokeWidth={2.6} />
        </FileChevron>
        <ShelfSep />
        <ShowAll>Show all</ShowAll>
        <ShelfClose>
          <X size={22} strokeWidth={2.6} />
        </ShelfClose>
      </DownloadBar>
      <Letterbox $h={29} />
    </Page>
  );
}
